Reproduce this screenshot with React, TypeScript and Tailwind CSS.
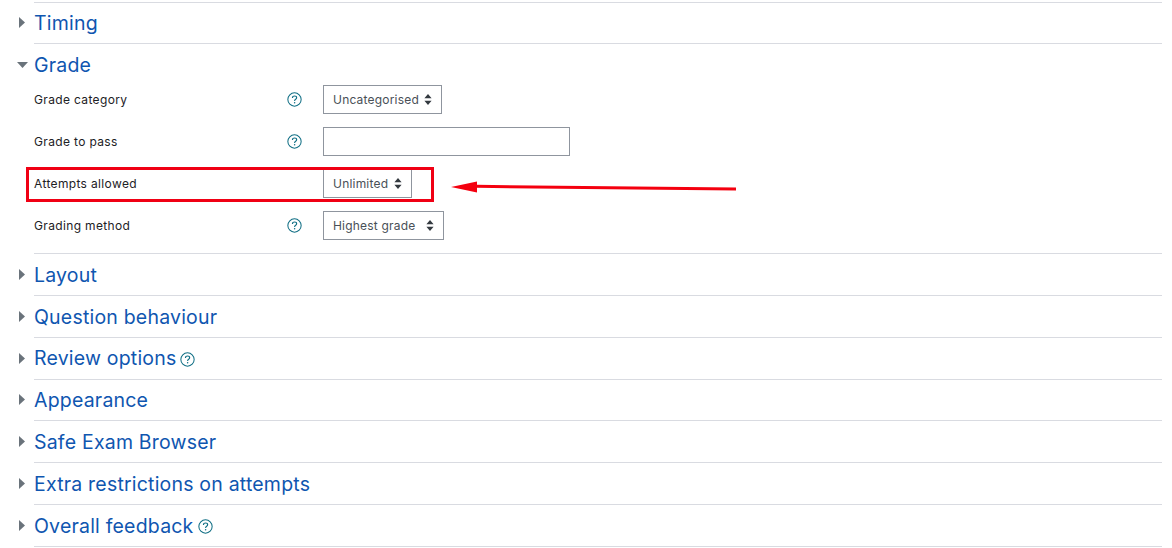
import React from 'react';

const font = "font-['Inter','Liberation_Sans',sans-serif]";

const HelpIcon: React.FC<{ size?: number }> = ({ size = 15 }) => (
  <svg width={size} height={size} viewBox="0 0 16 16" fill="none" className="shrink-0">
    <circle cx="8" cy="8" r="7.1" stroke="#0f6e84" strokeWidth="1.1" />
    <path d="M5.8 6.3c0-1.3 1-2.1 2.3-2.1 1.3 0 2.2.8 2.2 1.9 0 1.7-2.2 1.6-2.2 3.4" stroke="#0f6e84" strokeWidth="1.2" />
    <circle cx="8.1" cy="11.5" r=".8" fill="#0f6e84" />
  </svg>
);

const Caret: React.FC<{ open?: boolean }> = ({ open }) => (
  <div className="w-[34px] pl-[17px] shrink-0">
    {open ? (
      <svg width="11" height="6" viewBox="0 0 11 6" className="mt-[1px]"><path d="M0 0h11L5.5 6z" fill="#6a737b" /></svg>
    ) : (
      <svg width="6" height="11" viewBox="0 0 6 11" className="ml-[2px]"><path d="M0 0l6 5.5L0 11z" fill="#6a737b" /></svg>
    )}
  </div>
);

const Section: React.FC<{ title: string; help?: boolean; open?: boolean }> = ({ title, help, open }) => (
  <div className="flex items-center h-[40.8px]">
    <Caret open={open} />
    <span className="mt-[2px] text-[19.5px] leading-none text-[#0f56b0] tracking-[0.2px]">{title}</span>
    {help && <span className="ml-[4px] mt-[3px]"><HelpIcon size={15} /></span>}
  </div>
);

const Divider = () => <div className="ml-[34px] mr-[10px] h-px bg-[#d9dbe1]" />;

const Select: React.FC<{ label: string; width: string }> = ({ label, width }) => (
  <div className={`flex items-center justify-between h-[29px] border border-[#8f959e] bg-white px-[9px] ${width}`}>
    <span className="mt-[2px] text-[12px] text-[#495057] tracking-[0.2px] whitespace-nowrap">{label}</span>
    <svg width="8" height="11" viewBox="0 0 8 11"><path d="M4 0l3.6 4.2H.4zM4 11L.4 6.8h7.2z" fill="#343a40" /></svg>
  </div>
);

const Field: React.FC<{ label: string; help?: boolean; children: React.ReactNode }> = ({ label, help, children }) => (
  <div className="flex items-center h-[42px] pl-[34px]">
    <span className="w-[253px] mt-[2px] text-[12px] text-[#1d2125] tracking-[0.35px]">{label}</span>
    <span className="w-[36px]">{help && <HelpIcon />}</span>
    {children}
  </div>
);

export default function App() {
  return (
    <div className={`relative w-[1172px] h-[548px] bg-white overflow-hidden ${font}`}>
      <div className="pt-[1.6px]">
        <Divider />
        <Section title="Timing" />
        <Divider />
        <Section title="Grade" open />
        <div className="-mt-[7px] pb-[7px]">
          <Field label="Grade category" help><Select label="Uncategorised" width="w-[119px]" /></Field>
          <Field label="Grade to pass" help><div className="w-[247px] h-[29px] border border-[#8f959e] bg-white" /></Field>
          <Field label="Attempts allowed"><Select label="Unlimited" width="w-[89px]" /></Field>
          <Field label="Grading method" help><Select label="Highest grade" width="w-[121px]" /></Field>
        </div>
        <Divider />
        <Section title="Layout" />
        <Divider />
        <Section title="Question behaviour" />
        <Divider />
        <Section title="Review options" help />
        <Divider />
        <Section title="Appearance" />
        <Divider />
        <Section title="Safe Exam Browser" />
        <Divider />
        <Section title="Extra restrictions on attempts" />
        <Divider />
        <Section title="Overall feedback" help />
        <Divider />
      </div>

      {/* annotation drawn over the form */}
      <div className="absolute left-[26px] top-[167px] w-[408px] h-[35px] border-[3px] border-[#f00014]" />
      <svg className="absolute left-[450px] top-[178px]" width="290" height="18" viewBox="0 0 290 18">
        <path d="M1 9L27 3.5V14.5z" fill="#f4000f" />
        <path d="M26 8.3L286 11" stroke="#f4000f" strokeWidth="3" />
      </svg>
    </div>
  );
}
